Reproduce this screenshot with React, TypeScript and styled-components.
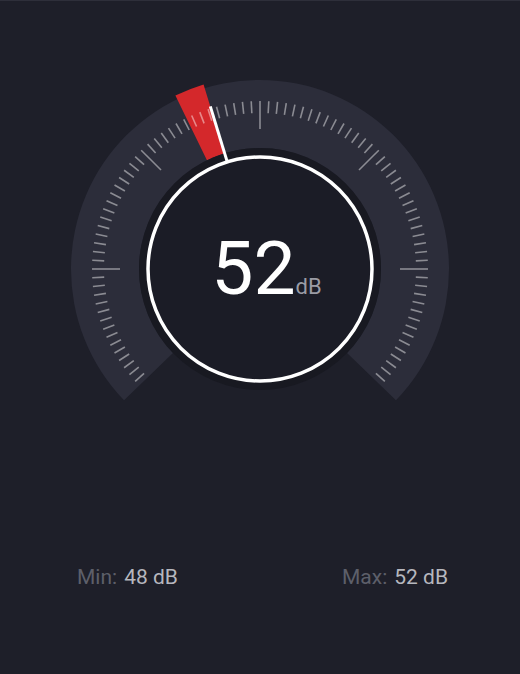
import { FunctionComponent } from 'react'
import { styled, createGlobalStyle } from 'styled-components'

const GlobalStyle = createGlobalStyle`
  html, body {
    margin: 0;
    padding: 0;
    background-color: #1e1f29;
  }
  body {
    font-family: Roboto, 'Liberation Sans', sans-serif;
  }
`

// gauge geometry, in svg coordinates
const CX = 200
const CY = 199
const BAND_OUTER = 189
const BAND_INNER = 121
const BAND_END = 134
const SCALE_MAX = 120

const current = 52
const minLevel = 48
const maxLevel = 52

const angleOf = (value: number) => -134 + (value / SCALE_MAX) * 270

const point = (r: number, deg: number) => {
  const rad = (deg * Math.PI) / 180
  return `${(CX + r * Math.sin(rad)).toFixed(2)} ${(CY - r * Math.cos(rad)).toFixed(2)}`
}

const sector = (rOut: number, rIn: number, from: number, to: number) => {
  const large = to - from > 180 ? 1 : 0
  return [
    `M ${point(rOut, from)}`,
    `A ${rOut} ${rOut} 0 ${large} 1 ${point(rOut, to)}`,
    `L ${point(rIn, to)}`,
    `A ${rIn} ${rIn} 0 ${large} 0 ${point(rIn, from)}`,
    'Z'
  ].join(' ')
}

// one tick every 3 degrees, a long one every 45
const ticks = Array.from({ length: 89 }, (_, i) => {
  const angle = -132 + i * 3
  const major = angle % 45 === 0
  return { angle, major }
})

const Gauge: FunctionComponent = () => {
  const needle = (angleOf(current) * Math.PI) / 180
  return (
    <GaugeWrap>
      <svg width='400' height='340' viewBox='0 0 400 340'>
        <path d={sector(BAND_OUTER, BAND_INNER, -BAND_END, BAND_END)} fill='#2c2d3a' />
        <path d={sector(193, BAND_INNER, angleOf(minLevel), angleOf(maxLevel))} fill='#d4282b' />
        {ticks.map(({ angle, major }) => {
          const rad = (angle * Math.PI) / 180
          const r1 = 168
          const r2 = major ? 140 : 156
          return (
            <line
              key={angle}
              x1={CX + r1 * Math.sin(rad)}
              y1={CY - r1 * Math.cos(rad)}
              x2={CX + r2 * Math.sin(rad)}
              y2={CY - r2 * Math.cos(rad)}
              stroke='rgba(255,255,255,0.45)'
              strokeWidth='1.6'
            />
          )
        })}
        <circle cx={CX} cy={CY} r={BAND_INNER} fill='#181921' />
        <line
          x1={CX + 112 * Math.sin(needle)}
          y1={CY - 112 * Math.cos(needle)}
          x2={CX + 170 * Math.sin(needle)}
          y2={CY - 170 * Math.cos(needle)}
          stroke='#ffffff'
          strokeWidth='3'
        />
        <circle cx={CX} cy={CY} r='112' fill='#1b1c26' stroke='#ffffff' strokeWidth='3.5' />
      </svg>
      <Readout>
        <Value>{current}</Value>
        <Unit>dB</Unit>
      </Readout>
    </GaugeWrap>
  )
}

const App: FunctionComponent = () => {
  return (
    <Page>
      <GlobalStyle />
      <Gauge />
      <Stats>
        <Stat>
          <StatLabel>Min:</StatLabel>
          <StatValue>{minLevel} dB</StatValue>
        </Stat>
        <Stat>
          <StatLabel>Max:</StatLabel>
          <StatValue>{maxLevel} dB</StatValue>
        </Stat>
      </Stats>
    </Page>
  )
}
export default App

const Page = styled.div`
  width: 520px;
  height: 674px;
  box-sizing: border-box;
  border-top: 1px solid #2e2f3a;
  background-color: #1e1f29;
  display: flex;
  flex-direction: column;
  align-items: center;
  padding-top: 69px;
  overflow: hidden;
`

const GaugeWrap = styled.div`
  position: relative;
  width: 400px;
  height: 340px;

  svg {
    display: block;
  }
`

const Readout = styled.div`
  position: absolute;
  left: 0;
  right: 0;
  top: 161px;
  display: flex;
  justify-content: center;
  align-items: baseline;
  padding-left: 13px;
`

const Value = styled.span`
  font-size: 75px;
  line-height: 1;
  color: #ffffff;
`

const Unit = styled.span`
  font-size: 22px;
  line-height: 1;
  color: #9a9ba4;
`

const Stats = styled.div`
  align-self: stretch;
  margin-top: 155px;
  padding: 0 72px 0 77px;
  display: flex;
  justify-content: space-between;
`

const Stat = styled.div`
  display: flex;
  gap: 7px;
  font-size: 21px;
  line-height: 24px;
`

const StatLabel = styled.span`
  color: #5d5f6a;
`

const StatValue = styled.span`
  color: #b6b7be;
`
